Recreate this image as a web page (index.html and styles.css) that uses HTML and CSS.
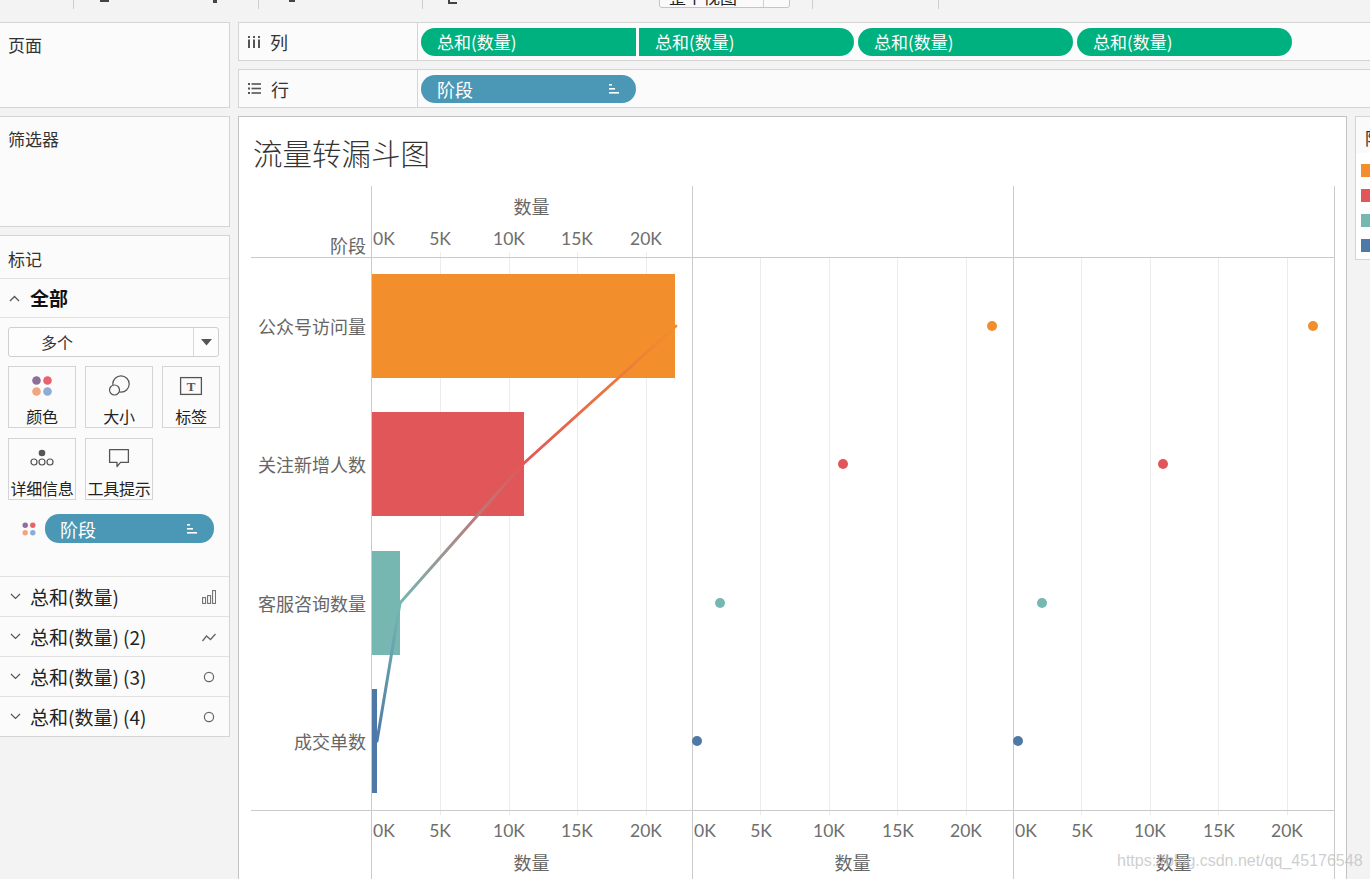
FILE: index.html
```html
<!DOCTYPE html>
<html lang="zh-CN">
<head>
<meta charset="utf-8">
<title>流量转漏斗图</title>
<link rel="stylesheet" href="styles.css">
</head>
<body>
<div class="toolbar">
  <i class="tsep s1"></i>
  <i class="tmark m1"></i>
  <i class="tmark m2"></i>
  <i class="tsep s2"></i>
  <i class="tmark m3"></i>
  <i class="tsep s3"></i>
  <i class="tmark m4"></i>
  <div class="tbox"><span class="tbox-text">整个视图</span><span class="tbox-arrow"></span></div>
  <i class="tsep s4"></i>
  <i class="tsep s5"></i>
</div>

<div class="main">
  <div class="left">
    <section class="card pages"><div class="card-title">页面</div></section>
    <section class="card filters"><div class="card-title">筛选器</div></section>
    <section class="card marks">
      <div class="marks-head">标记</div>
      <div class="marks-all">
        <svg class="chev" width="11" height="7" viewBox="0 0 11 7"><polyline points="1,6 5.5,1.5 10,6" fill="none" stroke="#555" stroke-width="1.3"/></svg>
        <span class="all-text">全部</span>
      </div>
      <div class="marks-body">
        <div class="dropdown">
          <span class="dd-text">多个</span>
          <span class="dd-btn"><svg width="11" height="7" viewBox="0 0 11 7"><polygon points="0,0 11,0 5.5,6.5" fill="#555"/></svg></span>
        </div>
        <div class="btn-grid">
          <div class="mbtn">
            <svg class="micon" width="24" height="22" viewBox="0 0 24 22">
              <circle cx="6.5" cy="5.5" r="4.3" fill="#8e6f97"/>
              <circle cx="17.5" cy="5.5" r="4.3" fill="#e9636f"/>
              <circle cx="6.5" cy="16.5" r="4.3" fill="#f2a57e"/>
              <circle cx="17.5" cy="16.5" r="4.3" fill="#8aaed5"/>
            </svg>
            <span class="mlabel">颜色</span>
          </div>
          <div class="mbtn">
            <svg class="micon" width="24" height="22" viewBox="0 0 24 22">
              <circle cx="14" cy="9" r="8.2" fill="none" stroke="#555" stroke-width="1.2"/>
              <circle cx="7.5" cy="15" r="5" fill="#fbfbfb" stroke="#555" stroke-width="1.2"/>
            </svg>
            <span class="mlabel">大小</span>
          </div>
          <div class="mbtn">
            <svg class="micon" width="24" height="22" viewBox="0 0 24 22">
              <rect x="1.6" y="2.6" width="20.8" height="16.8" fill="none" stroke="#555" stroke-width="1.3"/>
              <text x="12" y="15.5" text-anchor="middle" class="t-glyph">T</text>
            </svg>
            <span class="mlabel">标签</span>
          </div>
          <div class="mbtn">
            <svg class="micon" width="26" height="22" viewBox="0 0 26 22">
              <circle cx="13" cy="6" r="3.3" fill="#555"/>
              <circle cx="5" cy="15" r="3" fill="none" stroke="#555" stroke-width="1.2"/>
              <circle cx="13" cy="15" r="3" fill="none" stroke="#555" stroke-width="1.2"/>
              <circle cx="21" cy="15" r="3" fill="none" stroke="#555" stroke-width="1.2"/>
            </svg>
            <span class="mlabel">详细信息</span>
          </div>
          <div class="mbtn">
            <svg class="micon" width="24" height="22" viewBox="0 0 24 22">
              <path d="M2.6 2.6 H21.4 V15.4 H13.5 L10 19.5 V15.4 H2.6 Z" fill="none" stroke="#555" stroke-width="1.3" stroke-linejoin="round"/>
            </svg>
            <span class="mlabel">工具提示</span>
          </div>
        </div>
        <div class="pill-row">
          <svg class="dots4" width="14" height="14" viewBox="0 0 14 14">
            <circle cx="3.2" cy="3.2" r="2.7" fill="#8e6f97"/>
            <circle cx="10.8" cy="3.2" r="2.7" fill="#e9636f"/>
            <circle cx="3.2" cy="10.8" r="2.7" fill="#f2a57e"/>
            <circle cx="10.8" cy="10.8" r="2.7" fill="#8aaed5"/>
          </svg>
          <div class="pill dim mpill"><span>阶段</span>
            <svg class="sorti" width="11" height="10" viewBox="0 0 11 10"><rect x="0" y="0" width="3" height="1.6" fill="#fff"/><rect x="0" y="4" width="6" height="1.6" fill="#fff"/><rect x="0" y="8" width="10" height="1.6" fill="#fff"/></svg>
          </div>
        </div>
      </div>
      <div class="mrow">
        <svg class="chev" width="11" height="7" viewBox="0 0 11 7"><polyline points="1,1 5.5,5.5 10,1" fill="none" stroke="#555" stroke-width="1.2"/></svg>
        <span class="mrow-text">总和(数量)</span>
        <svg class="mrow-icon" width="14" height="14" viewBox="0 0 14 14"><rect x="0.6" y="7.6" width="3" height="5.8" fill="none" stroke="#666" stroke-width="1"/><rect x="5.6" y="5.6" width="3" height="7.8" fill="none" stroke="#666" stroke-width="1"/><rect x="10.6" y="0.6" width="3" height="12.8" fill="none" stroke="#666" stroke-width="1"/></svg>
      </div>
      <div class="mrow">
        <svg class="chev" width="11" height="7" viewBox="0 0 11 7"><polyline points="1,1 5.5,5.5 10,1" fill="none" stroke="#555" stroke-width="1.2"/></svg>
        <span class="mrow-text">总和(数量) (2)</span>
        <svg class="mrow-icon" width="14" height="14" viewBox="0 0 14 14"><polyline points="0.5,11 4.5,6 8.5,9.5 13.5,4" fill="none" stroke="#666" stroke-width="1.3"/></svg>
      </div>
      <div class="mrow">
        <svg class="chev" width="11" height="7" viewBox="0 0 11 7"><polyline points="1,1 5.5,5.5 10,1" fill="none" stroke="#555" stroke-width="1.2"/></svg>
        <span class="mrow-text">总和(数量) (3)</span>
        <svg class="mrow-icon" width="14" height="14" viewBox="0 0 14 14"><circle cx="7" cy="7" r="4.6" fill="none" stroke="#666" stroke-width="1.2"/></svg>
      </div>
      <div class="mrow">
        <svg class="chev" width="11" height="7" viewBox="0 0 11 7"><polyline points="1,1 5.5,5.5 10,1" fill="none" stroke="#555" stroke-width="1.2"/></svg>
        <span class="mrow-text">总和(数量) (4)</span>
        <svg class="mrow-icon" width="14" height="14" viewBox="0 0 14 14"><circle cx="7" cy="7" r="4.6" fill="none" stroke="#666" stroke-width="1.2"/></svg>
      </div>
    </section>
  </div>

  <div class="right">
    <div class="shelf cols">
      <div class="shelf-label">
        <svg class="shelf-icon" width="12" height="12" viewBox="0 0 12 12"><rect x="0" y="0" width="2" height="2" fill="#555"/><rect x="0" y="3.5" width="2" height="8.5" fill="#555"/><rect x="5" y="0" width="2" height="2" fill="#555"/><rect x="5" y="3.5" width="2" height="8.5" fill="#555"/><rect x="10" y="0" width="2" height="2" fill="#555"/><rect x="10" y="3.5" width="2" height="8.5" fill="#555"/></svg>
        <span class="shelf-name">列</span>
      </div>
      <div class="shelf-pills">
        <div class="pill meas joinl"><span>总和(数量)</span></div>
        <div class="pill meas joinr"><span>总和(数量)</span></div>
        <div class="pill meas"><span>总和(数量)</span></div>
        <div class="pill meas"><span>总和(数量)</span></div>
      </div>
    </div>
    <div class="shelf rows">
      <div class="shelf-label">
        <svg class="shelf-icon" width="13" height="11" viewBox="0 0 13 11"><rect x="0" y="0" width="2" height="2" fill="#555"/><rect x="3.5" y="0.2" width="9.5" height="1.6" fill="#555"/><rect x="0" y="4.5" width="2" height="2" fill="#555"/><rect x="3.5" y="4.7" width="9.5" height="1.6" fill="#555"/><rect x="0" y="9" width="2" height="2" fill="#555"/><rect x="3.5" y="9.2" width="9.5" height="1.6" fill="#555"/></svg>
        <span class="shelf-name">行</span>
      </div>
      <div class="shelf-pills">
        <div class="pill dim rpill"><span>阶段</span>
          <svg class="sorti" width="11" height="10" viewBox="0 0 11 10"><rect x="0" y="0" width="3" height="1.6" fill="#fff"/><rect x="0" y="4" width="6" height="1.6" fill="#fff"/><rect x="0" y="8" width="10" height="1.6" fill="#fff"/></svg>
        </div>
      </div>
    </div>

    <div class="content">
      <div class="view">
        <div class="title">流量转漏斗图</div>
        <svg class="chart" width="1107" height="700" viewBox="239 186 1107 700">
          <defs>
            <linearGradient id="g1" gradientUnits="userSpaceOnUse" x1="676" y1="326" x2="523" y2="464"><stop offset="0" stop-color="#f28e2b"/><stop offset="1" stop-color="#e15759"/></linearGradient>
            <linearGradient id="g2" gradientUnits="userSpaceOnUse" x1="523" y1="464" x2="400" y2="603"><stop offset="0" stop-color="#e15759"/><stop offset="1" stop-color="#76b7b2"/></linearGradient>
            <linearGradient id="g3" gradientUnits="userSpaceOnUse" x1="400" y1="603" x2="377" y2="741"><stop offset="0" stop-color="#76b7b2"/><stop offset="1" stop-color="#4e79a7"/></linearGradient>
          </defs>
          <g class="grid">
            <line x1="440.5" y1="252" x2="440.5" y2="815"/>
            <line x1="509.5" y1="252" x2="509.5" y2="815"/>
            <line x1="577.5" y1="252" x2="577.5" y2="815"/>
            <line x1="646.5" y1="252" x2="646.5" y2="815"/>
            <line x1="760.5" y1="257" x2="760.5" y2="815"/>
            <line x1="829.5" y1="257" x2="829.5" y2="815"/>
            <line x1="897.5" y1="257" x2="897.5" y2="815"/>
            <line x1="966.5" y1="257" x2="966.5" y2="815"/>
            <line x1="1081.5" y1="257" x2="1081.5" y2="815"/>
            <line x1="1150.5" y1="257" x2="1150.5" y2="815"/>
            <line x1="1218.5" y1="257" x2="1218.5" y2="815"/>
            <line x1="1287.5" y1="257" x2="1287.5" y2="815"/>
          </g>
          <g class="axis">
            <line x1="371.5" y1="186" x2="371.5" y2="886"/>
            <line x1="692.5" y1="186" x2="692.5" y2="886"/>
            <line x1="1013.5" y1="186" x2="1013.5" y2="886"/>
            <line x1="1334.5" y1="186" x2="1334.5" y2="886"/>
            <line x1="251" y1="257.5" x2="1335" y2="257.5"/>
            <line x1="251" y1="810.5" x2="1335" y2="810.5"/>
          </g>
          <g class="bars">
            <rect x="372" y="274" width="303" height="104" fill="#f28e2b"/>
            <rect x="372" y="412" width="152" height="104" fill="#e15759"/>
            <rect x="372" y="551" width="28" height="104" fill="#76b7b2"/>
            <rect x="372" y="689" width="5" height="104" fill="#4e79a7"/>
          </g>
          <g class="trend">
            <line x1="676" y1="326" x2="523" y2="464" stroke="url(#g1)"/>
            <line x1="523" y1="464" x2="400" y2="603" stroke="url(#g2)"/>
            <line x1="400" y1="603" x2="377" y2="741" stroke="url(#g3)"/>
          </g>
          <g class="dots">
            <circle cx="992" cy="326" r="5" fill="#f28e2b"/>
            <circle cx="843" cy="464" r="5" fill="#e15759"/>
            <circle cx="720" cy="603" r="5" fill="#76b7b2"/>
            <circle cx="697" cy="741" r="5" fill="#4e79a7"/>
            <circle cx="1313" cy="326" r="5" fill="#f28e2b"/>
            <circle cx="1163" cy="464" r="5" fill="#e15759"/>
            <circle cx="1042" cy="603" r="5" fill="#76b7b2"/>
            <circle cx="1018" cy="741" r="5" fill="#4e79a7"/>
          </g>
          <g class="cjk-label">
            <text x="531.5" y="206" text-anchor="middle">数量</text>
            <text x="366" y="245" text-anchor="end">阶段</text>
            <text x="366" y="326" text-anchor="end">公众号访问量</text>
            <text x="366" y="464" text-anchor="end">关注新增人数</text>
            <text x="366" y="603" text-anchor="end">客服咨询数量</text>
            <text x="366" y="741" text-anchor="end">成交单数</text>
            <text x="531.5" y="862" text-anchor="middle">数量</text>
            <text x="852.5" y="862" text-anchor="middle">数量</text>
            <text x="1173.5" y="862" text-anchor="middle">数量</text>
          </g>
          <g class="tick">
            <text x="373" y="238">0K</text>
            <text x="440" y="238" text-anchor="middle">5K</text>
            <text x="509" y="238" text-anchor="middle">10K</text>
            <text x="577" y="238" text-anchor="middle">15K</text>
            <text x="646" y="238" text-anchor="middle">20K</text>

            <text x="373" y="830">0K</text>
            <text x="440" y="830" text-anchor="middle">5K</text>
            <text x="509" y="830" text-anchor="middle">10K</text>
            <text x="577" y="830" text-anchor="middle">15K</text>
            <text x="646" y="830" text-anchor="middle">20K</text>

            <text x="694" y="830">0K</text>
            <text x="761" y="830" text-anchor="middle">5K</text>
            <text x="829" y="830" text-anchor="middle">10K</text>
            <text x="898" y="830" text-anchor="middle">15K</text>
            <text x="966" y="830" text-anchor="middle">20K</text>

            <text x="1015" y="830">0K</text>
            <text x="1082" y="830" text-anchor="middle">5K</text>
            <text x="1150" y="830" text-anchor="middle">10K</text>
            <text x="1219" y="830" text-anchor="middle">15K</text>
            <text x="1287" y="830" text-anchor="middle">20K</text>
          </g>
        </svg>
      </div>
      <div class="legend">
        <div class="legend-head">阶段</div>
        <div class="legend-items">
          <i class="sw orange"></i>
          <i class="sw red"></i>
          <i class="sw teal"></i>
          <i class="sw blue"></i>
        </div>
      </div>
    </div>
  </div>
</div>
<div class="watermark">https://blog.csdn.net/qq_45176548</div>
</body>
</html>
```
FILE: styles.css
```css
* { box-sizing: border-box; }
html, body { margin: 0; padding: 0; }
body {
  width: 1370px;
  height: 879px;
  overflow: hidden;
  background: #f3f3f3;
  font-family: "Noto Sans CJK SC", "Microsoft YaHei", sans-serif;
  color: #333;
  position: relative;
}

/* ---------- toolbar remnant ---------- */
.toolbar {
  height: 22px;
  display: flex;
  align-items: flex-start;
  overflow: hidden;
}
.tsep { display: block; width: 1px; height: 9px; background: #cdcdcd; }
.tmark { display: block; background: #444; }
.s1 { margin-left: 73px; }
.m1 { margin-left: 26px; width: 9px; height: 2px; }
.m2 { margin-left: 104px; width: 4px; height: 3px; }
.s2 { margin-left: 41px; }
.m3 { margin-left: 30px; width: 6px; height: 2px; }
.s3 { margin-left: 127px; }
.m4 { margin-left: 25px; width: 9px; height: 4px; background: transparent; border-left: 2px solid #444; border-bottom: 2px solid #444; }
.tbox {
  margin-left: 202px;
  margin-top: -20px;
  width: 131px;
  height: 28px;
  border: 1px solid #c4c4c4;
  border-radius: 3px;
  background: #fafafa;
  display: flex;
  overflow: hidden;
}
.tbox-text {
  width: 103px;
  padding-left: 9px;
  padding-top: 5px;
  font-size: 17px;
  line-height: 22px;
  color: #222;
}
.tbox-arrow { border-left: 1px solid #d0d0d0; flex: 1; }
.s4 { margin-left: 22px; }
.s5 { margin-left: 125px; }

/* ---------- main layout ---------- */
.main {
  display: flex;
  gap: 8px;
  height: 857px;
}
.left {
  width: 231px;
  margin-left: -1px;
  display: flex;
  flex-direction: column;
  gap: 8px;
  flex: none;
}
.card {
  background: #fbfbfb;
  border: 1px solid #d4d4d4;
}
.pages { height: 86px; }
.filters { height: 111px; }
.card-title {
  padding: 11px 0 0 8px;
  font-size: 17px;
  line-height: 22px;
  color: #333;
}
.marks { height: 502px; display: flex; flex-direction: column; }
.marks-head {
  height: 43px;
  padding: 12px 0 0 8px;
  font-size: 17px;
  line-height: 22px;
  border-bottom: 1px solid #e2e2e2;
}
.marks-all {
  height: 39px;
  display: flex;
  align-items: center;
  padding-left: 9px;
  gap: 10px;
  border-bottom: 1px solid #e2e2e2;
}
.all-text { font-size: 19px; font-weight: 700; line-height: 24px; color: #111; }
.chev { display: block; flex: none; }

.marks-body {
  height: 258px;
  padding: 9px 0 0 8px;
}
.dropdown {
  width: 211px;
  height: 30px;
  border: 1px solid #cfcfcf;
  border-radius: 3px;
  background: #fdfdfd;
  display: flex;
  align-items: stretch;
}
.dd-text {
  width: 184px;
  padding-left: 32px;
  font-size: 16px;
  line-height: 28px;
  color: #333;
}
.dd-btn {
  flex: 1;
  border-left: 1px solid #d8d8d8;
  display: flex;
  align-items: center;
  justify-content: center;
}
.dd-btn svg { display: block; }

.btn-grid {
  margin-top: 9px;
  display: grid;
  grid-template-columns: 68px 68px 58px;
  grid-auto-rows: 62px;
  column-gap: 9px;
  row-gap: 10px;
}
.mbtn {
  border: 1px solid #d4d4d4;
  background: #fbfbfb;
  display: flex;
  flex-direction: column;
  align-items: center;
  padding-top: 8px;
}
.micon { display: block; flex: none; }
.t-glyph { font-family: "Liberation Serif", serif; font-size: 13px; font-weight: 700; fill: #555; }
.mlabel {
  margin-top: 9px;
  font-size: 16px;
  line-height: 20px;
  color: #222;
  white-space: nowrap;
  letter-spacing: -0.3px;
}

.pill-row {
  margin-top: 14px;
  display: flex;
  align-items: center;
  padding-left: 14px;
  gap: 9px;
}
.dots4 { display: block; flex: none; }

.pill {
  height: 28px;
  border-radius: 14px;
  display: flex;
  align-items: center;
  color: #fff;
  font-size: 17px;
  line-height: 20px;
  padding-left: 16px;
  flex: none;
}
.meas { background: #00b180; width: 215px; }
.dim { background: #4a98b5; }
.joinl { border-radius: 14px 0 0 14px; }
.joinr { border-radius: 0 14px 14px 0; margin-left: -1px; }
.mpill { width: 169px; height: 29px; padding-left: 15px; font-size: 18px; justify-content: space-between; padding-right: 16px; }
.rpill { width: 215px; justify-content: space-between; padding-right: 16px; font-size: 18px; }
.sorti { display: block; }

.mrow {
  height: 40px;
  border-top: 1px solid #e2e2e2;
  display: flex;
  align-items: center;
  padding-left: 10px;
  padding-right: 13px;
}
.mrow-text { margin-left: 9px; font-size: 19px; line-height: 24px; color: #222; }
.mrow-icon { margin-left: auto; display: block; }

/* ---------- right ---------- */
.right {
  flex: 1;
  display: flex;
  flex-direction: column;
  gap: 8px;
  min-width: 0;
}
.shelf {
  background: #fbfbfb;
  border: 1px solid #d4d4d4;
  border-right: none;
  display: flex;
}
.cols { height: 39px; }
.rows { height: 39px; }
.shelf-label {
  width: 179px;
  border-right: 1px solid #d4d4d4;
  display: flex;
  align-items: center;
  padding-left: 9px;
  gap: 10px;
}
.shelf-icon { display: block; }
.shelf-name { font-size: 18px; line-height: 22px; color: #333; }
.shelf-pills {
  display: flex;
  align-items: center;
  padding-left: 3px;
  gap: 4px;
}
.shelf-pills .joinr { margin-left: -1px; }

.content {
  flex: 1;
  display: flex;
  gap: 8px;
  min-height: 0;
}
.view {
  width: 1109px;
  flex: none;
  background: #fff;
  border: 1px solid #c3c3c3;
  border-bottom: none;
  overflow: hidden;
}
.title {
  height: 69px;
  padding: 17px 0 0 14px;
  font-size: 29.5px;
  line-height: 36px;
  color: #333;
  font-weight: 300;
}
.chart { display: block; }
.grid line { stroke: #ececec; stroke-width: 1; }
.axis line { stroke: #cacaca; stroke-width: 1; }
.trend line { stroke-width: 3; stroke-linecap: round; }
.cjk-label text {
  font-family: "Noto Sans CJK SC", sans-serif;
  font-size: 18px;
  fill: #666;
  dominant-baseline: central;
}
.tick text {
  font-family: Lato, "Open Sans", sans-serif;
  font-size: 17.5px;
  fill: #6e6e6e;
  dominant-baseline: central;
}

.legend {
  width: 40px;
  flex: none;
  height: 144px;
  background: #fff;
  border: 1px solid #d4d4d4;
  border-right: none;
}
.legend-head {
  height: 36px;
  padding: 11px 0 0 9px;
  font-size: 17px;
  line-height: 20px;
  color: #333;
  background: #fafafa;
  white-space: nowrap;
}
.legend-items {
  padding: 11px 0 0 5px;
  display: flex;
  flex-direction: column;
  gap: 12px;
}
.sw { display: block; height: 13px; width: 40px; }
.orange { background: #f28e2b; }
.red { background: #e15759; }
.teal { background: #76b7b2; }
.blue { background: #4e79a7; }

.watermark {
  position: absolute;
  left: 1117px;
  top: 850px;
  font-family: "Liberation Sans", Arial, sans-serif;
  font-size: 16px;
  line-height: 22px;
  color: rgba(190, 190, 190, 0.75);
  white-space: nowrap;
}
```
